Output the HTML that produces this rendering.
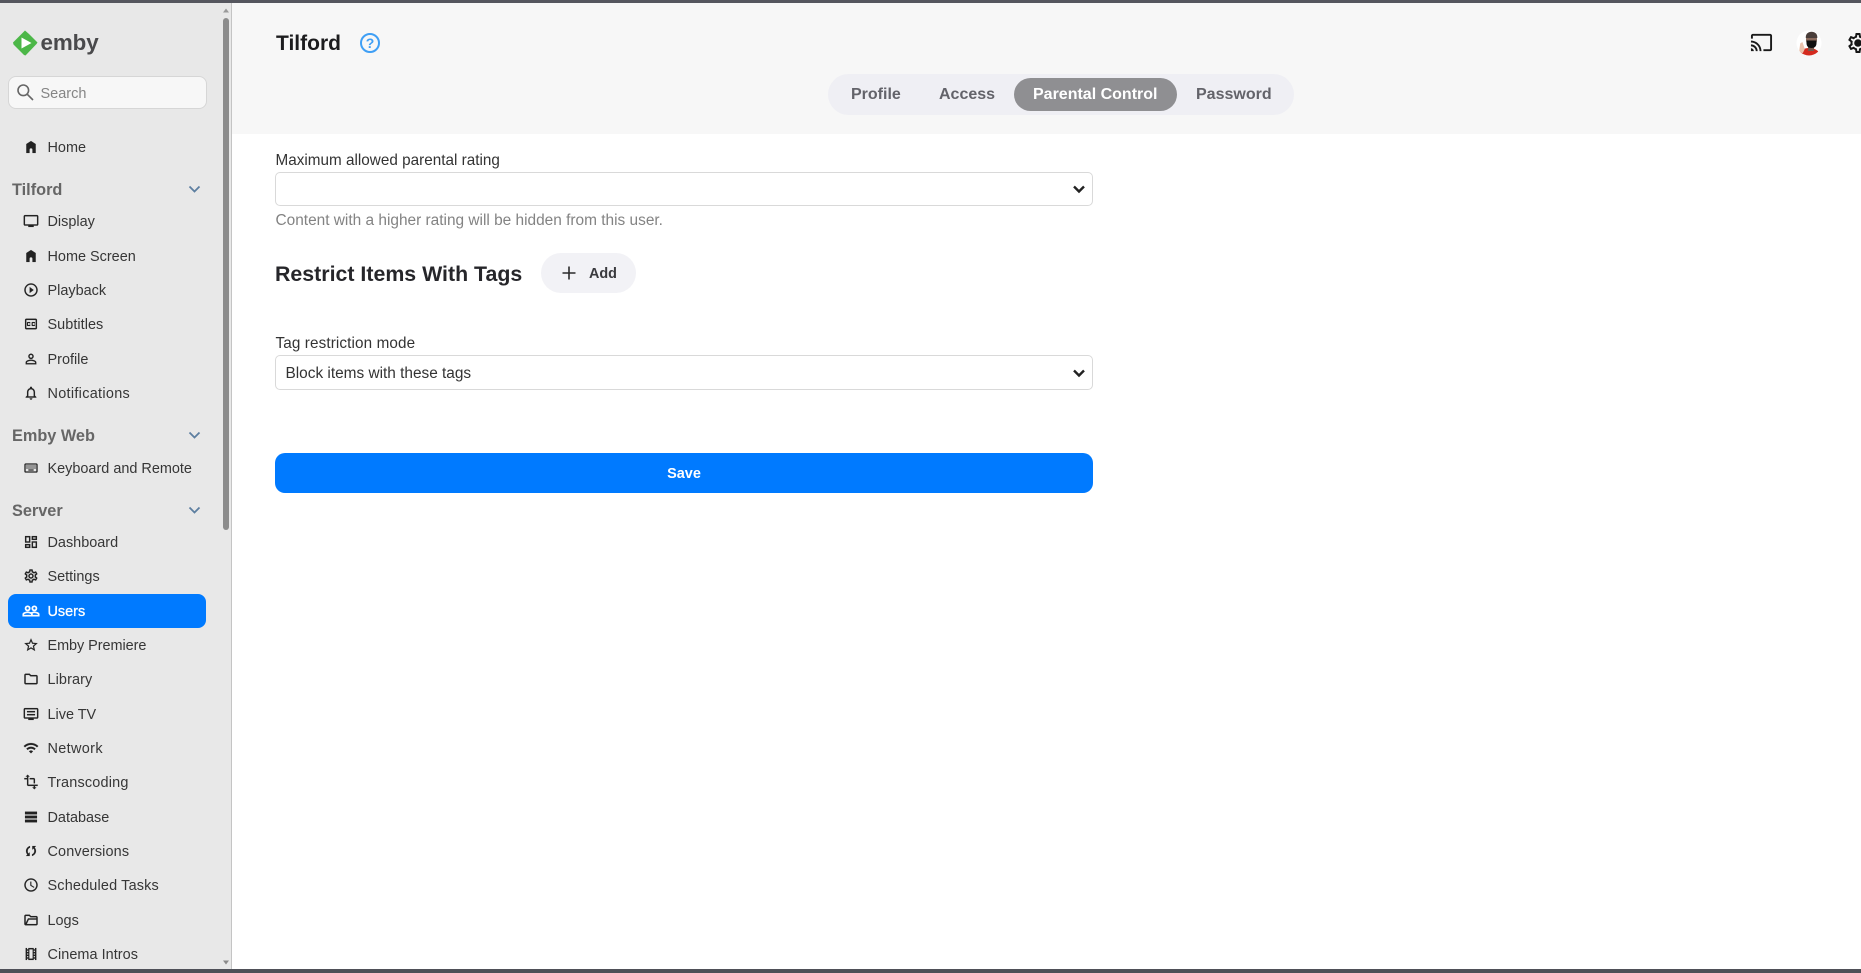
<!DOCTYPE html>
<html lang="en">
<head>
<meta charset="utf-8">
<title>Tilford - Parental Control</title>
<style>
html,body{margin:0;padding:0;width:1861px;height:973px;overflow:hidden;background:#fff;font-family:"Liberation Sans",Arial,sans-serif;color:#333}
*{box-sizing:border-box}
.abs,.it,.sec,.lbl{position:absolute;white-space:nowrap}
#top{position:absolute;left:0;top:0;width:1861px;height:3px;background:#55565e;z-index:5}
#bot{position:absolute;left:0;top:969px;width:1861px;height:4px;background:#4f5058;z-index:5}
#side{position:absolute;left:0;top:3px;width:232px;height:966px;background:#e8e8e8;border-right:1px solid #c4c4c4}
#hdr{position:absolute;left:232px;top:3px;width:1629px;height:131px;background:#f7f7f7}
.it{left:0;width:206px;height:34px;line-height:36px;font-size:14.45px;color:#363636;padding-left:47.5px}
.it svg{position:absolute;left:23px;top:9px;width:16px;height:16px;fill:#222;stroke:#222;stroke-width:.2}
.sec{left:12px;font-size:16.3px;font-weight:bold;color:#666;height:24px;line-height:26px;width:190px}
.sec svg{position:absolute;left:176px;top:6px;width:13px;height:12px;fill:none;stroke:#5d7fa0;stroke-width:1.8}
.lbl{left:275.5px;font-size:15.25px;color:#333;line-height:22px;height:22px}
.sel{position:absolute;left:275px;width:818px;background:#fff;border:1.3px solid #d9d9d9;border-radius:5px;font-size:15.4px;color:#333;padding-left:9.5px}
.sel svg{position:absolute;right:4px;top:50%;margin-top:-9px;width:18px;height:18px;fill:none;stroke:#222;stroke-width:2.4}
.tab{position:absolute;top:78px;height:33px;line-height:34px;font-size:16px;font-weight:bold;color:#63636a;white-space:nowrap}
</style>
</head>
<body>
<div id="top"></div>
<div id="bot"></div>

<div id="side"></div>
<!-- scrollbar -->
<div class="abs" style="left:223px;top:18px;width:6px;height:512px;background:#8c8c8c;border-radius:3px"></div>
<svg class="abs" style="left:223px;top:8px;width:6px;height:5px"><path d="M3 0.5L6 4.5H0z" fill="#9a9a9a"/></svg>
<svg class="abs" style="left:223px;top:960px;width:6px;height:5px"><path d="M0 0.5H6L3 4.5z" fill="#8a8a8a"/></svg>

<!-- logo -->
<svg class="abs" style="left:12px;top:29px;width:27px;height:28px" viewBox="0 0 27 28">
<path d="M13 1.5L17 5 25.5 13.5 24.5 15 13.5 26.5 12 26 1.5 15.5 1 13.5z" fill="#4cb748"/>
<path d="M9.5 8.5L19.5 14 9.5 19.5z" fill="#fff"/>
</svg>
<div class="abs" style="left:40.5px;top:28.5px;font-size:22.4px;font-weight:bold;line-height:28px;color:#4a4a4c;letter-spacing:-.1px">emby</div>

<!-- search -->
<div class="abs" style="left:8px;top:76px;width:199px;height:33px;background:#f7f7f7;border:1.3px solid #d6d6d6;border-radius:8px"></div>
<svg class="abs" style="left:16px;top:83px;width:18px;height:18px" viewBox="0 0 18 18" fill="none" stroke="#666" stroke-width="1.6"><circle cx="7.3" cy="7.3" r="5.3"/><path d="M11.3 11.3L17 17"/></svg>
<div class="abs" style="left:40.5px;top:77px;line-height:34px;font-size:14.5px;color:#858585">Search</div>

<!-- nav -->
<div class="it" style="top:130px"><svg viewBox="0 0 24 24"><path d="M12 3L5 7.5V21h4.8v-5a2.2 2.2 0 0 1 4.4 0v5H19V7.5z"/></svg>Home</div>

<div class="sec" style="top:177px">Tilford<svg viewBox="0 0 13 12"><path d="M1.5 3.5L6.5 8.5 11.5 3.5"/></svg></div>
<div class="it" style="top:204px"><svg viewBox="0 0 24 24"><path d="M21 3H3c-1.1 0-2 .9-2 2v12c0 1.1.9 2 2 2h5v2h8v-2h5c1.1 0 1.99-.9 1.99-2L23 5c0-1.1-.9-2-2-2zm0 14H3V5h18v12z"/></svg>Display</div>
<div class="it" style="top:239px"><svg viewBox="0 0 24 24"><path d="M12 3L5 7.5V21h4.8v-5a2.2 2.2 0 0 1 4.4 0v5H19V7.5z"/></svg>Home Screen</div>
<div class="it" style="top:273px"><svg viewBox="0 0 24 24"><path d="M10 16.5l6-4.5-6-4.5v9zM12 2C6.48 2 2 6.48 2 12s4.48 10 10 10 10-4.48 10-10S17.52 2 12 2zm0 18c-4.41 0-8-3.59-8-8s3.59-8 8-8 8 3.59 8 8-3.59 8-8 8z"/></svg>Playback</div>
<div class="it" style="top:307px;letter-spacing:.05px"><svg viewBox="0 0 24 24"><path d="M19 4H5c-1.11 0-2 .9-2 2v12c0 1.1.89 2 2 2h14c1.1 0 2-.9 2-2V6c0-1.1-.9-2-2-2zm0 14H5V6h14v12zM7 15h3c.55 0 1-.45 1-1v-1H9.5v.5h-2v-3h2v.5H11v-1c0-.55-.45-1-1-1H7c-.55 0-1 .45-1 1v4c0 .55.45 1 1 1zm7 0h3c.55 0 1-.45 1-1v-1h-1.5v.5h-2v-3h2v.5H18v-1c0-.55-.45-1-1-1h-3c-.55 0-1 .45-1 1v4c0 .55.45 1 1 1z"/></svg>Subtitles</div>
<div class="it" style="top:342px"><svg viewBox="0 0 24 24"><path d="M12 5.9c1.16 0 2.1.94 2.1 2.1s-.94 2.1-2.1 2.1S9.9 9.16 9.9 8s.94-2.1 2.1-2.1m0 9c2.97 0 6.1 1.46 6.1 2.1v1.1H5.9V17c0-.64 3.13-2.1 6.1-2.1M12 4C9.79 4 8 5.79 8 8s1.79 4 4 4 4-1.79 4-4-1.79-4-4-4zm0 9c-2.67 0-8 1.34-8 4v3h16v-3c0-2.66-5.33-4-8-4z"/></svg>Profile</div>
<div class="it" style="top:376px;letter-spacing:.3px"><svg viewBox="0 0 24 24"><path d="M12 22c1.1 0 2-.9 2-2h-4c0 1.1.9 2 2 2zm6-6v-5c0-3.07-1.63-5.64-4.5-6.32V4c0-.83-.67-1.5-1.5-1.5s-1.5.67-1.5 1.5v.68C7.64 5.36 6 7.92 6 11v5l-2 2v1h16v-1l-2-2zm-2 1H8v-6c0-2.48 1.51-4.5 4-4.5s4 2.02 4 4.5v6z"/></svg>Notifications</div>

<div class="sec" style="top:423px">Emby Web<svg viewBox="0 0 13 12"><path d="M1.5 3.5L6.5 8.5 11.5 3.5"/></svg></div>
<div class="it" style="top:451px"><svg viewBox="0 0 24 24" style="stroke:none"><path d="M20 7v10H4V7h16m0-2H4c-1.1 0-1.99.9-1.99 2L2 17c0 1.1.9 2 2 2h16c1.1 0 2-.9 2-2V7c0-1.1-.9-2-2-2zm-9 3h2v2h-2zm0 3h2v2h-2zM8 8h2v2H8zm0 3h2v2H8zm-3 0h2v2H5zm0-3h2v2H5zm3 6h8v2H8zm6-3h2v2h-2zm0-3h2v2h-2zm3 3h2v2h-2zm0-3h2v2h-2z"/></svg>Keyboard and Remote</div>

<div class="sec" style="top:498px">Server<svg viewBox="0 0 13 12"><path d="M1.5 3.5L6.5 8.5 11.5 3.5"/></svg></div>
<div class="it" style="top:525px"><svg viewBox="0 0 24 24"><path d="M19 5v2h-4V5h4M9 5v6H5V5h4m10 8v6h-4v-6h4M9 17v2H5v-2h4M21 3h-8v6h8V3zM11 3H3v10h8V3zm10 8h-8v10h8V11zm-10 4H3v6h8v-6z"/></svg>Dashboard</div>
<div class="it" style="top:559px"><svg viewBox="0 0 24 24"><path d="M19.43 12.98c.04-.32.07-.64.07-.98s-.03-.66-.07-.98l2.11-1.65c.19-.15.24-.42.12-.64l-2-3.46c-.12-.22-.39-.3-.61-.22l-2.49 1c-.52-.4-1.08-.73-1.69-.98l-.38-2.65C14.46 2.18 14.25 2 14 2h-4c-.25 0-.46.18-.49.42l-.38 2.65c-.61.25-1.17.59-1.69.98l-2.49-1c-.23-.09-.49 0-.61.22l-2 3.46c-.13.22-.07.49.12.64l2.11 1.65c-.04.32-.07.65-.07.98s.03.66.07.98l-2.11 1.65c-.19.15-.24.42-.12.64l2 3.46c.12.22.39.3.61.22l2.49-1c.52.4 1.08.73 1.69.98l.38 2.65c.03.24.24.42.49.42h4c.25 0 .46-.18.49-.42l.38-2.65c.61-.25 1.17-.59 1.69-.98l2.49 1c.23.09.49 0 .61-.22l2-3.46c.12-.22.07-.49-.12-.64l-2.11-1.65zM17.45 11.27c.04.31.05.52.05.73 0 .21-.02.43-.05.73l-.14 1.13.89.7 1.08.84-.7 1.21-1.27-.51-1.04-.42-.9.68c-.43.32-.84.56-1.25.73l-1.06.43-.16 1.13-.2 1.35h-1.4l-.19-1.35-.16-1.13-1.06-.43c-.43-.18-.83-.41-1.23-.71l-.91-.7-1.06.43-1.27.51-.7-1.21 1.08-.84.89-.7-.14-1.13C6.52 12.43 6.5 12.2 6.5 12s.02-.43.05-.72l.14-1.13-.89-.7-1.08-.84.7-1.21 1.27.51 1.04.42.9-.68c.43-.32.84-.56 1.25-.73l1.06-.43.16-1.13.2-1.35h1.39l.19 1.35.16 1.13 1.06.43c.43.18.83.41 1.23.71l.91.7 1.06-.43 1.27-.51.7 1.21-1.07.85-.89.7.14 1.13zM12 8c-2.21 0-4 1.79-4 4s1.79 4 4 4 4-1.79 4-4-1.79-4-4-4zm0 6c-1.1 0-2-.9-2-2s.9-2 2-2 2 .9 2 2-.9 2-2 2z"/></svg>Settings</div>

<div class="abs" style="left:8px;top:594px;width:198px;height:34px;background:#007aff;border-radius:8px"></div>
<div class="it" style="top:594px;color:#fff;-webkit-text-stroke:.3px #fff"><svg viewBox="0 0 24 24" style="fill:#fff;stroke:#fff;stroke-width:.8;left:22px;top:8px;width:18px;height:18px"><path d="M16.5 13c-1.2 0-3.07.34-4.5 1-1.43-.67-3.3-1-4.5-1C5.33 13 1 14.08 1 16.25V19h22v-2.75c0-2.17-4.33-3.25-6.5-3.25zm-4 4.5h-10v-1.25c0-.54 2.56-1.75 5-1.75s5 1.21 5 1.75v1.25zm9 0H14v-1.25c0-.46-.2-.86-.52-1.22.88-.3 1.96-.53 3.02-.53 2.44 0 5 1.21 5 1.75v1.25zM7.5 12c1.93 0 3.5-1.57 3.5-3.5S9.43 5 7.5 5 4 6.57 4 8.5 5.57 12 7.5 12zm0-5.5c1.1 0 2 .9 2 2s-.9 2-2 2-2-.9-2-2 .9-2 2-2zm9 5.5c1.93 0 3.5-1.57 3.5-3.5S18.43 5 16.5 5 13 6.57 13 8.5s1.57 3.5 3.5 3.5zm0-5.5c1.1 0 2 .9 2 2s-.9 2-2 2-2-.9-2-2 .9-2 2-2z"/></svg>Users</div>

<div class="it" style="top:628px;letter-spacing:-.05px"><svg viewBox="0 0 24 24"><path d="M22 9.24l-7.19-.62L12 2 9.19 8.63 2 9.24l5.46 4.73L5.82 21 12 17.27 18.18 21l-1.63-7.03L22 9.24zM12 15.4l-3.76 2.27 1-4.28-3.32-2.88 4.38-.38L12 6.1l1.71 4.04 4.38.38-3.32 2.88 1 4.28L12 15.4z"/></svg>Emby Premiere</div>
<div class="it" style="top:662px;letter-spacing:.1px"><svg viewBox="0 0 24 24"><path d="M9.17 6l2 2H20v10H4V6h5.17M10 4H4c-1.1 0-1.99.9-1.99 2L2 18c0 1.1.9 2 2 2h16c1.1 0 2-.9 2-2V8c0-1.1-.9-2-2-2h-8l-2-2z"/></svg>Library</div>
<div class="it" style="top:697px"><svg viewBox="0 0 24 24"><path d="M21 3H3c-1.1 0-2 .9-2 2v12c0 1.1.9 2 2 2h5v2h8v-2h5c1.1 0 1.99-.9 1.99-2L23 5c0-1.1-.9-2-2-2zm0 14H3V5h18v12zM6 7.5h12v2H6zM6 12h12v2H6z"/></svg>Live TV</div>
<div class="it" style="top:731px;letter-spacing:.35px"><svg viewBox="0 0 24 24"><path d="M1 9l2 2c4.97-4.97 13.03-4.97 18 0l2-2C16.93 2.93 7.08 2.93 1 9zm8 8l3 3 3-3c-1.65-1.66-4.34-1.66-6 0zm-4-4l2 2c2.76-2.76 7.24-2.76 10 0l2-2C15.14 9.14 8.87 9.14 5 13z"/></svg>Network</div>
<div class="it" style="top:765px;letter-spacing:.2px"><svg viewBox="0 0 24 24"><path d="M22 18v-2H8V4h2L7 1 4 4h2v2H2v2h4v8c0 1.1.9 2 2 2h8v2h-2l3 3 3-3h-2v-2h4zM10 8h6v6h2V8c0-1.1-.9-2-2-2h-6v2z"/></svg>Transcoding</div>
<div class="it" style="top:800px"><svg viewBox="0 0 24 24"><path d="M3 20h18v-4H3v4zM3 4v4h18V4H3zm0 10h18v-4H3v4z"/></svg>Database</div>
<div class="it" style="top:834px;letter-spacing:.13px"><svg viewBox="0 0 24 24"><path d="M10.5 4.5C7 5.5 4.5 8.5 4.5 12c0 2 .8 3.8 2 5.2L4.5 19.5H10V14l-1.9 1.7C7.3 14.700 7 13.400 7 12c0-2.300 1.500-4.300 3.500-5zM13.500 19.500c3.500-1 6-4 6-7.500 0-2-.8-3.800-2-5.200l2-2.300H14V10l1.900-1.700c.8 1 1.100 2.300 1.100 3.700 0 2.300-1.500 4.300-3.500 5z"/></svg>Conversions</div>
<div class="it" style="top:868px;letter-spacing:.17px"><svg viewBox="0 0 24 24"><path d="M11.99 2C6.47 2 2 6.48 2 12s4.47 10 9.99 10C17.52 22 22 17.52 22 12S17.52 2 11.99 2zM12 20c-4.42 0-8-3.58-8-8s3.58-8 8-8 8 3.58 8 8-3.58 8-8 8zm.5-13H11v6l5.25 3.15.75-1.23-4.5-2.67z"/></svg>Scheduled Tasks</div>
<div class="it" style="top:903px"><svg viewBox="0 0 24 24"><path d="M20 6h-8l-2-2H4c-1.1 0-2 .9-2 2v12c0 1.1.9 2 2 2h16c1.1 0 2-.9 2-2V8c0-1.1-.9-2-2-2zM4 6h5.2l2 2H20v1.5H7.5L4 16.5zm16 12H5.7l3-6.5H20z"/></svg>Logs</div>
<div class="it" style="top:937px;letter-spacing:.05px"><svg viewBox="0 0 24 24"><path d="M18 3v2h-2V3H8v2H6V3H4v18h2v-2h2v2h8v-2h2v2h2V3h-2zM8 17H6v-2h2v2zm0-4H6v-2h2v2zm0-4H6V7h2v2zm6.500 10h-5V5h5v14zM18 17h-2v-2h2v2zm0-4h-2v-2h2v2zm0-4h-2V7h2v2z"/></svg>Cinema Intros</div>

<!-- header -->
<div id="hdr"></div>
<div class="abs" style="left:276px;top:29px;font-size:21px;font-weight:bold;line-height:30px;color:#1c1c1e">Tilford</div>
<svg class="abs" style="left:359px;top:32px;width:22px;height:22px" viewBox="0 0 22 22"><circle cx="11" cy="11" r="9" fill="none" stroke="#3f9ff5" stroke-width="2"/><text x="11" y="16" text-anchor="middle" font-family="Liberation Sans, sans-serif" font-size="14" font-weight="bold" fill="#3f9ff5">?</text></svg>

<svg class="abs" style="left:1750px;top:31px;width:23px;height:23px;fill:#1a1a1a" viewBox="0 0 24 24"><path d="M21 3H3c-1.1 0-2 .9-2 2v3h2V5h18v14h-7v2h7c1.1 0 2-.9 2-2V5c0-1.1-.9-2-2-2zM1 18v3h3c0-1.66-1.34-3-3-3zm0-4v2c2.76 0 5 2.24 5 5h2c0-3.87-3.13-7-7-7zm0-4v2c4.97 0 9 4.03 9 9h2c0-6.08-4.93-11-11-11z"/></svg>

<svg class="abs" style="left:1796px;top:30px;width:26px;height:26px" viewBox="0 0 26 26">
<defs><clipPath id="av"><circle cx="13" cy="13" r="12.5"/></clipPath></defs>
<g clip-path="url(#av)">
<rect width="26" height="26" fill="#fff"/>
<path d="M2 27c1-6 5-9 11-9s11 3 12 9z" fill="#d42a1e"/>
<rect x="12" y="16" width="6" height="5" fill="#7a5a4e"/>
<ellipse cx="15.5" cy="9.500" rx="5.500" ry="7.500" fill="#8a6a5c"/>
<path d="M9.800 7c0-7 11.500-7 11.500 0v1H9.800z" fill="#4a3e3a"/>
<path d="M10.500 10.500h10v2.500c0 3.500-2 5-5 5s-5-1.500-5-5z" fill="#111"/>
<path d="M3 22.500l1.200-9 2.200-1.500 2.400 7-2 4z" fill="#ecc3ae"/>
</g>
</svg>

<svg class="abs" style="left:1846px;top:31px;width:24px;height:24px;fill:#161616" viewBox="0 0 24 24"><path fill-rule="evenodd" d="M19.43 12.98c.04-.32.07-.64.07-.98s-.03-.66-.07-.98l2.11-1.65c.19-.15.24-.42.12-.64l-2-3.46c-.12-.22-.39-.3-.61-.22l-2.49 1c-.52-.4-1.08-.73-1.69-.98l-.38-2.65C14.46 2.18 14.25 2 14 2h-4c-.25 0-.46.18-.49.42l-.38 2.65c-.61.25-1.17.59-1.69.98l-2.49-1c-.23-.09-.49 0-.61.22l-2 3.46c-.13.22-.07.49.12.64l2.11 1.65c-.04.32-.07.65-.07.98s.03.66.07.98l-2.11 1.65c-.19.15-.24.42-.12.64l2 3.46c.12.22.39.3.61.22l2.49-1c.52.4 1.08.73 1.69.98l.38 2.65c.03.24.24.42.49.42h4c.25 0 .46-.18.49-.42l.38-2.65c.61-.25 1.17-.59 1.69-.98l2.49 1c.23.09.49 0 .61-.22l2-3.46c.12-.22.07-.49-.12-.64l-2.11-1.65zM17.45 11.27c.04.31.05.52.05.73 0 .21-.02.43-.05.73l-.14 1.13.89.7 1.08.84-.7 1.21-1.27-.51-1.04-.42-.9.68c-.43.32-.84.56-1.25.73l-1.06.43-.16 1.13-.2 1.35h-1.4l-.19-1.35-.16-1.13-1.06-.43c-.43-.18-.83-.41-1.23-.71l-.91-.7-1.06.43-1.27.51-.7-1.21 1.08-.84.89-.7-.14-1.13C6.52 12.43 6.5 12.2 6.5 12s.02-.43.05-.72l.14-1.13-.89-.7-1.08-.84.7-1.21 1.27.51 1.04.42.9-.68c.43-.32.84-.56 1.25-.73l1.06-.43.16-1.13.2-1.35h1.39l.19 1.35.16 1.13 1.06.43c.43.18.83.41 1.23.71l.91.7 1.06-.43 1.27-.51.7 1.21-1.07.85-.89.7.14 1.13z"/><circle cx="12" cy="12" r="3.8"/></svg>

<!-- tabs -->
<div class="abs" style="left:828px;top:74px;width:466px;height:41px;background:#efeff4;border-radius:21px"></div>
<div class="abs" style="left:1014px;top:78px;width:163px;height:33px;background:#8f8f92;border-radius:17px"></div>
<div class="tab" style="left:851px">Profile</div>
<div class="tab" style="left:939px">Access</div>
<div class="tab" style="left:1033px;color:#fff">Parental Control</div>
<div class="tab" style="left:1196px">Password</div>

<!-- form -->
<div class="lbl" style="top:150px;letter-spacing:.02px">Maximum allowed parental rating</div>
<div class="sel" style="top:172px;height:34px"><svg viewBox="0 0 18 18"><path d="M4 6.5L9 11.5 14 6.5"/></svg></div>
<div class="abs" style="left:275.5px;top:211px;font-size:15.43px;line-height:20px;color:#838383">Content with a higher rating will be hidden from this user.</div>

<div class="abs" style="left:275px;top:259px;font-size:21.35px;font-weight:bold;line-height:30px;color:#26262a">Restrict Items With Tags</div>
<div class="abs" style="left:541px;top:253px;width:95px;height:40px;background:#f2f2f6;border-radius:20px"></div>
<svg class="abs" style="left:562px;top:266px;width:14px;height:14px" viewBox="0 0 14 14"><path d="M7 0.5V13.5M0.5 7H13.5" stroke="#2b2b2b" stroke-width="1.6" fill="none"/></svg>
<div class="abs" style="left:589px;top:254px;line-height:40px;font-size:14.4px;font-weight:bold;color:#3a3a3e">Add</div>

<div class="lbl" style="top:333px;letter-spacing:.12px">Tag restriction mode</div>
<div class="sel" style="top:355px;height:35px;line-height:35px">Block items with these tags<svg viewBox="0 0 18 18"><path d="M4 6.5L9 11.5 14 6.5"/></svg></div>

<div class="abs" style="left:275px;top:453px;width:818px;height:40px;background:#007aff;border-radius:10px;color:#fff;text-align:center;line-height:42px;font-size:14.5px;font-weight:bold">Save</div>
</body>
</html>
